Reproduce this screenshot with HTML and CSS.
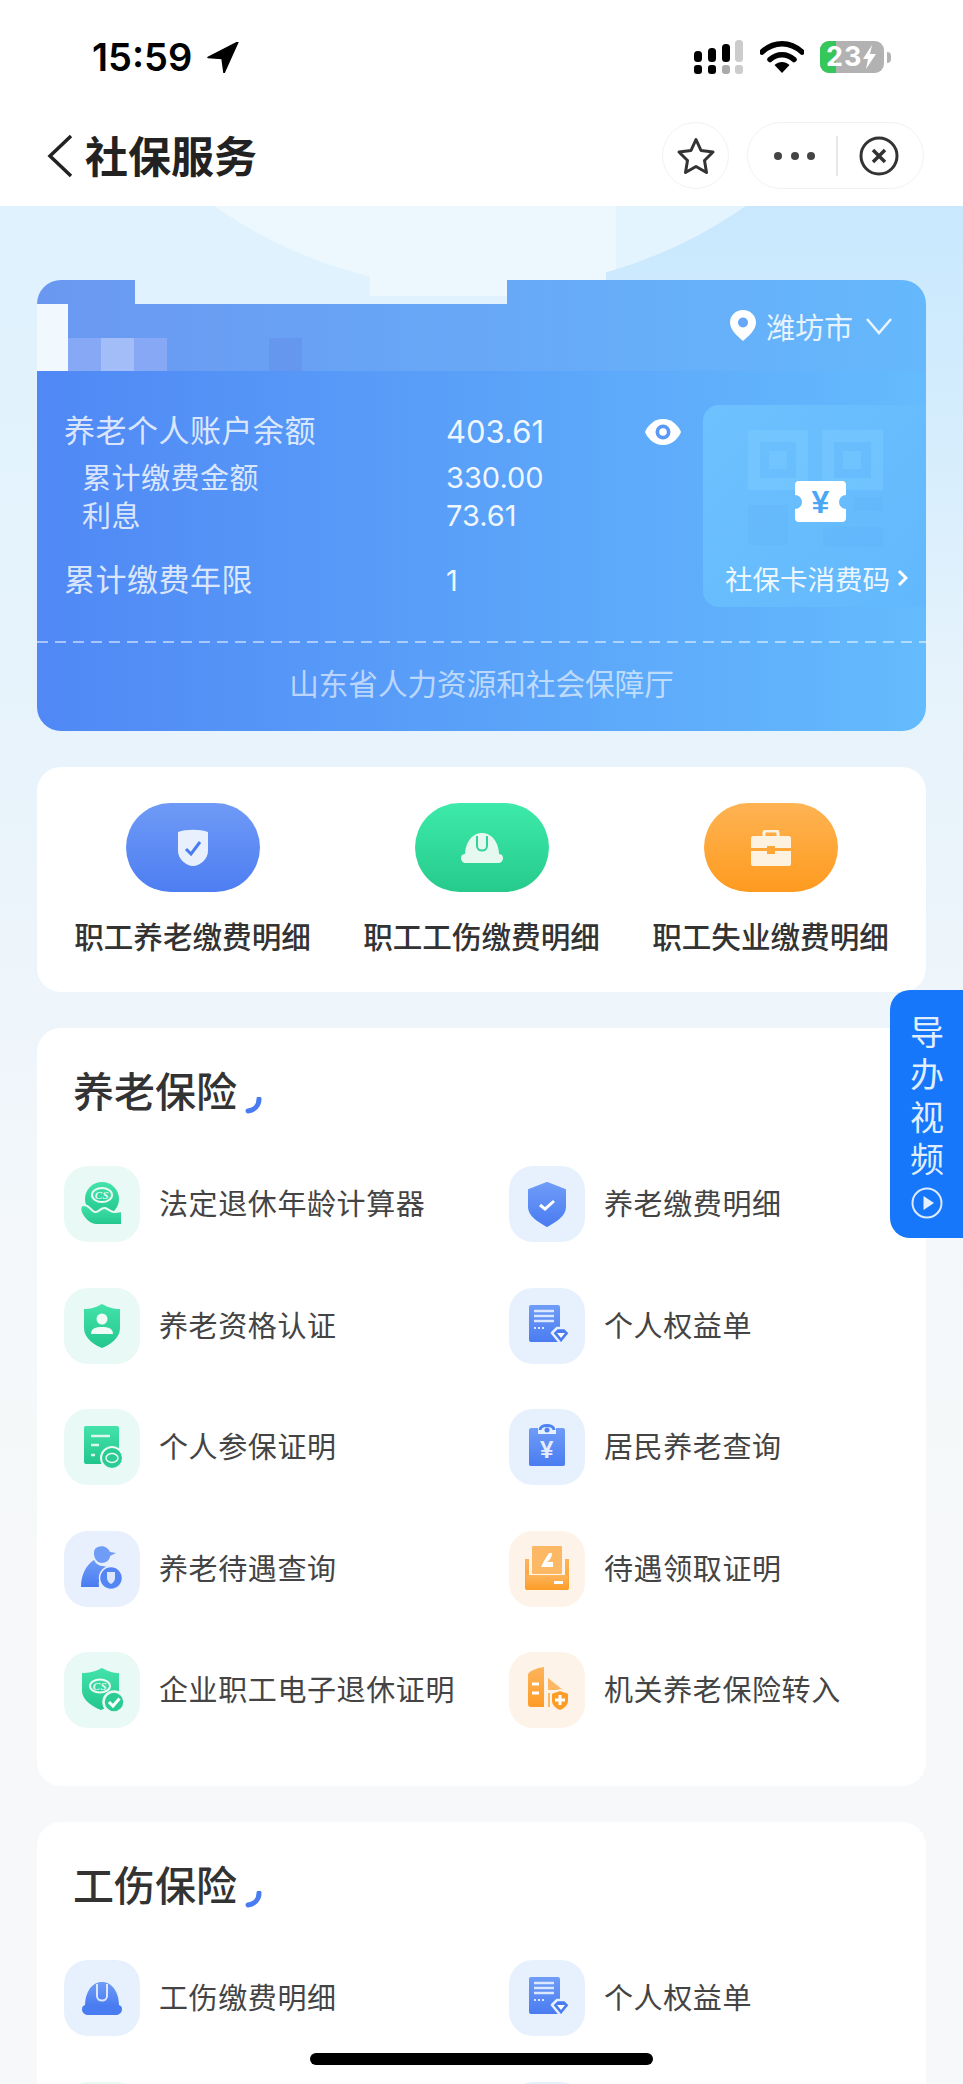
FILE: index.html
```html
<!doctype html>
<html>
    <head>
        <title>社保服务</title>
        <link rel="stylesheet" href="styles.css">
    </head>
    <body>
        <!-- shared icon gradients -->
        <svg class="icon_defs" width="0" height="0">
            <defs>
                <linearGradient id="g_green" x1="0" y1="0" x2="0" y2="1">
                    <stop offset="0" stop-color="#43e3ab"/><stop offset="1" stop-color="#22c68d"/>
                </linearGradient>
                <linearGradient id="g_blue" x1="0" y1="0" x2="0" y2="1">
                    <stop offset="0" stop-color="#6f9cf7"/><stop offset="1" stop-color="#4a7cf1"/>
                </linearGradient>
                <linearGradient id="g_orange" x1="0" y1="0" x2="0" y2="1">
                    <stop offset="0" stop-color="#fdb45c"/><stop offset="1" stop-color="#fd9c26"/>
                </linearGradient>
                <linearGradient id="g_fade" x1="0" y1="0" x2="0" y2="1">
                    <stop offset="0" stop-color="#c9e8fd"/><stop offset="1" stop-color="#c9e8fd" stop-opacity="0"/>
                </linearGradient>
                <linearGradient id="g_lens" gradientUnits="userSpaceOnUse" x1="0" y1="0" x2="963" y2="0">
                    <stop offset="0.64" stop-color="#edf8fe"/><stop offset="0.64" stop-color="#e3f4fe"/>
                </linearGradient>
            </defs>
        </svg>

        <div class="page">
            <header class="top_bar">
                <div class="status_bar">
                    <div class="status_time">
                        <span>15:59</span>
                        <svg width="32" height="31" viewBox="0 0 32 31"><path d="M31 0 1 15.500 15 16.500 17 31z" fill="#000" stroke="#000" stroke-width="1.500" stroke-linejoin="round"/></svg>
                    </div>
                    <div class="status_icons">
                        <svg width="49" height="35" viewBox="0 0 49 35">
                            <rect x="0" y="11" width="8" height="11" rx="3.500" fill="#000"/>
                            <rect x="0" y="25" width="8" height="9" rx="3" fill="#000"/>
                            <rect x="14" y="8" width="8" height="14" rx="3.500" fill="#000"/>
                            <rect x="14" y="25" width="8" height="9" rx="3" fill="#000"/>
                            <rect x="28" y="4" width="8" height="18" rx="3.500" fill="#000"/>
                            <rect x="28" y="25" width="8" height="9" rx="3" fill="#aaa"/>
                            <rect x="41" y="0" width="8" height="22" rx="3.500" fill="#ccc"/>
                            <rect x="41" y="25" width="8" height="9" rx="3" fill="#ccc"/>
                        </svg>
                        <svg class="wifi" width="44" height="32" viewBox="0 0 44 32">
                            <path d="M2 11C14 0 30 0 42 11" fill="none" stroke="#000" stroke-width="5.500" stroke-linecap="round"/>
                            <path d="M10 18.500C17 12 27 12 34 18.500" fill="none" stroke="#000" stroke-width="5.500" stroke-linecap="round"/>
                            <path d="M22 32 14.500 24C19 20 25 20 29.500 24z" fill="#000"/>
                        </svg>
                        <div class="battery">
                            <div class="battery_fill"></div>
                            <span class="battery_num">23</span>
                            <svg class="battery_bolt" width="13" height="24" viewBox="0 0 13 24"><path d="M9 0 0 14h5l-2 10 10-15H7z" fill="#fff"/></svg>
                        </div>
                        <div class="battery_nub"></div>
                    </div>
                </div>
                <nav class="nav_bar">
                    <svg class="nav_back" width="28" height="44" viewBox="0 0 28 44"><path d="M25 2 4 22l21 20" fill="none" stroke="#222" stroke-width="3.500"/></svg>
                    <h1 class="nav_title">社保服务</h1>
                    <div class="nav_star">
                        <svg width="40" height="40" viewBox="0 0 40 40"><path d="M20 3.500 25 14.500 37 16 28.500 24.500 30.500 36.500 20 30.500 9.500 36.500 11.500 24.500 3 16 15 14.500z" fill="none" stroke="#333" stroke-width="3" stroke-linejoin="round"/></svg>
                    </div>
                    <div class="nav_capsule">
                        <div class="nav_dots"><i></i><i></i><i></i></div>
                        <div class="nav_divider"></div>
                        <svg width="40" height="40" viewBox="0 0 40 40"><circle cx="20" cy="20" r="18" fill="none" stroke="#333" stroke-width="3"/><path d="M14 14 26 26M26 14 14 26" stroke="#333" stroke-width="3.500"/></svg>
                    </div>
                </nav>
            </header>

            <!-- pale shapes behind the account card -->
            <svg class="bg_shapes" width="963" height="480" viewBox="0 0 963 480">
                <path d="M600 0H963V480H600z" fill="url(#g_fade)"/>
                <circle cx="480" cy="-378" r="462" fill="url(#g_lens)"/>
                <rect x="370" y="0" width="236" height="90" fill="#edf8fe"/>
            </svg>

            <main class="content">
                <section class="account_card">
                    <div class="account_head">
                        <div class="mosaic">
                            <i class="m_white"></i><i class="m_a"></i><i class="m_b"></i><i class="m_a"></i><i class="m_gap"></i><i class="m_c"></i>
                        </div>
                        <div class="city">
                            <svg width="26" height="31" viewBox="0 0 26 31"><path d="M13 0C5.800 0 0 5.500 0 12.500 0 20 8 26.500 13 31 18 26.500 26 20 26 12.500 26 5.500 20.200 0 13 0z" fill="#fff"/><circle cx="13" cy="12.500" r="5" fill="#67a6f8"/></svg>
                            <span>潍坊市</span>
                            <svg width="28" height="18" viewBox="0 0 28 18"><path d="M2 2 14 16 26 2" fill="none" stroke="#fff" stroke-opacity="0.85" stroke-width="2.500"/></svg>
                        </div>
                    </div>
                    <div class="account_body">
                        <div class="account_info">
                            <div class="info_row info_main">
                                <span>养老个人账户余额</span><b>403.61</b>
                                <svg class="info_eye" width="36" height="26" viewBox="0 0 36 26"><path d="M18 0C28 0 34 8 36 13 34 18 28 26 18 26 8 26 2 18 0 13 2 8 8 0 18 0z" fill="#fff"/><circle cx="18" cy="13" r="7.500" fill="#5a9af6"/><circle cx="18" cy="13" r="3.800" fill="#fff"/></svg>
                            </div>
                            <div class="info_row info_sub"><span>累计缴费金额</span><b>330.00</b></div>
                            <div class="info_row info_sub"><span>利息</span><b>73.61</b></div>
                            <div class="info_row info_last"><span>累计缴费年限</span><b>1</b></div>
                        </div>
                        <div class="qr_panel">
                            <svg class="qr_art" width="223" height="145" viewBox="0 0 223 145">
                                <g fill="none" stroke="#7fd0ff" stroke-opacity="0.4" stroke-width="12">
                                    <rect x="51" y="31" width="48" height="48"/>
                                    <rect x="125" y="31" width="49" height="48"/>
                                </g>
                                <rect x="66" y="46" width="18" height="18" fill="#7fd0ff" fill-opacity="0.35"/>
                                <rect x="140" y="46" width="18" height="18" fill="#7fd0ff" fill-opacity="0.35"/>
                                <g fill="#5aaef8" fill-opacity="0.18">
                                    <rect x="45" y="100" width="40" height="40"/>
                                    <rect x="150" y="92" width="30" height="14"/>
                                    <rect x="120" y="122" width="60" height="20"/>
                                </g>
                                <path d="M96 76H139a4 4 0 0 1 4 4V90a7 7 0 0 0 0 14V113a4 4 0 0 1-4 4H96a4 4 0 0 1-4-4V104a7 7 0 0 0 0-14V80a4 4 0 0 1 4-4z" fill="#fff"/>
                                <text class="qr_yen" x="117.500" y="108" text-anchor="middle">¥</text>
                            </svg>
                            <div class="qr_label">社保卡消费码<svg width="11" height="18" viewBox="0 0 11 18"><path d="M2 2 9 9 2 16" fill="none" stroke="#fff" stroke-width="3"/></svg></div>
                        </div>
                    </div>
                    <div class="account_foot"><span>山东省人力资源和社会保障厅</span></div>
                </section>

                <section class="quick_card">
                    <div class="quick_item">
                        <div class="quick_pill pill_blue">
                            <svg width="34" height="37" viewBox="0 0 34 37"><path d="M2 3C10 0 24 0 32 3V22C32 30 24 37 17 37 10 37 2 30 2 22z" fill="#e8f0fe"/><path d="M10 20 15 25 24 13" fill="none" stroke="#4a7cf1" stroke-width="3"/></svg>
                        </div>
                        <span>职工养老缴费明细</span>
                    </div>
                    <div class="quick_item">
                        <div class="quick_pill pill_green">
                            <svg width="44" height="30" viewBox="0 0 44 30"><path d="M5 22C5 10 12 0 22 0 32 0 39 10 39 22z" fill="#e6f9f1"/><path d="M17 3V13C17 19 27 19 27 13V3" fill="none" stroke="#2fd497" stroke-width="2"/><path d="M1 25C1 22 3 21 5 21H39C41 21 43 22 43 25 43 28 41 30 38 30H6C3 30 1 28 1 25z" fill="#e6f9f1"/></svg>
                        </div>
                        <span>职工工伤缴费明细</span>
                    </div>
                    <div class="quick_item">
                        <div class="quick_pill pill_orange">
                            <svg width="40" height="36" viewBox="0 0 40 36"><path d="M13 7V3C13 1.500 14 1 15 1H25C26 1 27 1.500 27 3V7" fill="none" stroke="#fdf1e0" stroke-width="3"/><path d="M2 6H38C39 6 40 7 40 8V18H24V16H16V18H0V8C0 7 1 6 2 6z" fill="#fdf1e0"/><path d="M0 21H16V24H24V21H40V34C40 35 39 36 38 36H2C1 36 0 35 0 34z" fill="#fdf1e0"/></svg>
                        </div>
                        <span>职工失业缴费明细</span>
                    </div>
                </section>

                <section class="service_card">
                    <h2 class="service_title">养老保险<svg width="18" height="17" viewBox="0 0 18 17"><path d="M14 2C14 8 10 13 3 14" fill="none" stroke="#4a7cf1" stroke-width="5" stroke-linecap="round"/></svg></h2>
                    <div class="service_grid">
                        <div class="service_item">
                            <div class="tile tile_green">
                                <svg width="48" height="48" viewBox="0 0 48 48">
                                    <circle cx="24" cy="19" r="17" fill="url(#g_green)"/>
                                    <ellipse cx="24" cy="15" rx="10" ry="7" fill="none" stroke="#eafaf4" stroke-width="2"/>
                                    <text class="logo_cs" x="24" y="19" text-anchor="middle">CS</text>
                                    <path d="M3 26C7 23 11 27 15 31 20 35 22 27 27 28 31 29 33 33 37 32L44 31V45H18C10 45 0 33 3 26z" fill="url(#g_green)" stroke="#eaf9f5" stroke-width="2"/>
                                </svg>
                            </div>
                            <span>法定退休年龄计算器</span>
                        </div>
                        <div class="service_item">
                            <div class="tile tile_blue">
                                <svg width="48" height="48" viewBox="0 0 48 48"><path d="M24 3 42 10V27C42 36 31 42 24 46 17 42 6 36 6 27V10z" fill="url(#g_blue)" stroke="url(#g_blue)" stroke-width="2" stroke-linejoin="round"/><path d="M17 25 22 29 31 21" fill="none" stroke="#fff" stroke-width="3"/></svg>
                            </div>
                            <span>养老缴费明细</span>
                        </div>
                        <div class="service_item">
                            <div class="tile tile_green">
                                <svg width="48" height="48" viewBox="0 0 48 48"><path d="M24 2C31 6 36 7 42 7V26C42 37 31 43 24 46 17 43 6 37 6 26V7C12 7 17 6 24 2z" fill="url(#g_green)"/><circle cx="24" cy="17" r="5.500" fill="#f0fbf7"/><path d="M13 32C13 26 18 25 24 25 30 25 35 26 35 32z" fill="#f0fbf7"/></svg>
                            </div>
                            <span>养老资格认证</span>
                        </div>
                        <div class="service_item">
                            <div class="tile tile_blue">
                                <svg width="48" height="48" viewBox="0 0 48 48"><rect x="6" y="3" width="31" height="37" rx="2" fill="url(#g_blue)"/><path d="M11 9H31M11 14H31M11 19H31" stroke="#dbe7fd" stroke-width="2.500"/><path d="M11 26H22" stroke="#dbe7fd" stroke-width="2" stroke-dasharray="2 2"/><path d="M29 31 34 26H42L47 31 38 42z" fill="#4a7cf1" stroke="#e7f0fe" stroke-width="2.500" stroke-linejoin="round"/><path d="M34 31H42L38 36z" fill="#fff"/></svg>
                            </div>
                            <span>个人权益单</span>
                        </div>
                        <div class="service_item">
                            <div class="tile tile_green">
                                <svg width="48" height="48" viewBox="0 0 48 48"><rect x="6" y="3" width="35" height="38" rx="2" fill="url(#g_green)"/><path d="M13 13H32M13 22H21M13 32H17" stroke="#dcf7ec" stroke-width="2.500"/><circle cx="34" cy="35" r="11" fill="#2bcc94" stroke="#eaf9f5" stroke-width="2"/><ellipse cx="34" cy="35" rx="6" ry="4.500" fill="none" stroke="#eaf9f5" stroke-width="1.500"/></svg>
                            </div>
                            <span>个人参保证明</span>
                        </div>
                        <div class="service_item">
                            <div class="tile tile_blue">
                                <svg width="48" height="48" viewBox="0 0 48 48"><path d="M17 7C17 1 31 1 31 7" fill="none" stroke="#4f82f2" stroke-width="3"/><path d="M8 5H15V11H33V5H40C41.500 5 42 6 42 7V41C42 42 41.500 43 40 43H8C6.500 43 6 42 6 41V7C6 6 6.500 5 8 5z" fill="url(#g_blue)"/><circle cx="24" cy="7" r="2.500" fill="#4f82f2"/><text class="logo_yen" x="24" y="35" text-anchor="middle">¥</text></svg>
                            </div>
                            <span>居民养老查询</span>
                        </div>
                        <div class="service_item">
                            <div class="tile tile_indigo">
                                <svg width="48" height="48" viewBox="0 0 48 48"><path d="M20 2C26 0 30 3 32 7L38 8 32 11C32 15 28 18 24 18 19 18 16 13 16 9 16 5 17 3 20 2z" fill="#6f9cf7"/><path d="M16 15C18 19 21 21 25 21L29 22C24 25 20 32 21 42H3C3 30 8 20 16 15z" fill="url(#g_blue)"/><circle cx="33" cy="33" r="11.500" fill="#5486f3" stroke="#e8effd" stroke-width="1.500"/><path d="M29 27H37V33C37 36 35 38 33 39 31 38 29 36 29 33z" fill="#dbe7fd"/></svg>
                            </div>
                            <span>养老待遇查询</span>
                        </div>
                        <div class="service_item">
                            <div class="tile tile_orange">
                                <svg width="48" height="48" viewBox="0 0 48 48"><rect x="9" y="1" width="30" height="28" rx="1" fill="#fdb866"/><path d="M21 16 26 8 29 8C29 12 27 15 24 17L30 17V22H18z" fill="#fff"/><path d="M2 14H6V30H42V14H46V43C46 44 45 45 44 45H4C3 45 2 44 2 43z" fill="url(#g_orange)"/><rect x="3" y="30" width="42" height="15" rx="1" fill="url(#g_orange)"/><rect x="31" y="36" width="9" height="3" fill="#fff"/></svg>
                            </div>
                            <span>待遇领取证明</span>
                        </div>
                        <div class="service_item">
                            <div class="tile tile_green">
                                <svg width="48" height="48" viewBox="0 0 48 48"><path d="M24 2C31 6 36 7 41 7V25C41 34 31 41 23 44 15 41 4 34 4 25V7C10 7 17 6 24 2z" fill="url(#g_green)"/><ellipse cx="22" cy="20" rx="10" ry="6.500" fill="none" stroke="#eafaf4" stroke-width="2"/><text class="logo_cs" x="22" y="24" text-anchor="middle">CS</text><circle cx="36" cy="36" r="10.500" fill="#2bcc94" stroke="#eaf9f5" stroke-width="2.500"/><path d="M31 36 35 40 41.500 32.500" fill="none" stroke="#fff" stroke-width="3"/></svg>
                            </div>
                            <span>企业职工电子退休证明</span>
                        </div>
                        <div class="service_item">
                            <div class="tile tile_orange">
                                <svg width="48" height="48" viewBox="0 0 48 48"><path d="M5 9C5 5 14 2 21 1V41H8C6 41 5 40 5 38z" fill="url(#g_orange)"/><path d="M9 18H16M9 27H16" stroke="#fff" stroke-width="3"/><path d="M25 12 40 24 25 24z" fill="#fdb866"/><path d="M25 27H27V41H25z" fill="#fdb866"/><path d="M37 24 46 27V35C46 40 41 44 37 45 33 44 28 40 28 35V27z" fill="#fd9c26" stroke="#fef3e8" stroke-width="2"/><path d="M32 34H42M37 29V39" stroke="#fff" stroke-width="3"/></svg>
                            </div>
                            <span>机关养老保险转入</span>
                        </div>
                    </div>
                </section>

                <section class="service_card">
                    <h2 class="service_title">工伤保险<svg width="18" height="17" viewBox="0 0 18 17"><path d="M14 2C14 8 10 13 3 14" fill="none" stroke="#4a7cf1" stroke-width="5" stroke-linecap="round"/></svg></h2>
                    <div class="service_grid">
                        <div class="service_item">
                            <div class="tile tile_blue">
                                <svg width="48" height="48" viewBox="0 0 48 48"><path d="M7 32C7 18 14 8 24 8 34 8 41 18 41 32z" fill="url(#g_blue)"/><path d="M19 10V22C19 28 29 28 29 22V10" fill="none" stroke="#dbe7fd" stroke-width="2"/><path d="M4 35C4 32 6 31 8 31H40C42 31 44 32 44 35 44 39 41 41 37 41H11C7 41 4 39 4 35z" fill="#4a7cf1"/></svg>
                            </div>
                            <span>工伤缴费明细</span>
                        </div>
                        <div class="service_item">
                            <div class="tile tile_blue">
                                <svg width="48" height="48" viewBox="0 0 48 48"><rect x="6" y="3" width="31" height="37" rx="2" fill="url(#g_blue)"/><path d="M11 9H31M11 14H31M11 19H31" stroke="#dbe7fd" stroke-width="2.500"/><path d="M11 26H22" stroke="#dbe7fd" stroke-width="2" stroke-dasharray="2 2"/><path d="M29 31 34 26H42L47 31 38 42z" fill="#4a7cf1" stroke="#e7f0fe" stroke-width="2.500" stroke-linejoin="round"/><path d="M34 31H42L38 36z" fill="#fff"/></svg>
                            </div>
                            <span>个人权益单</span>
                        </div>
                        <div class="service_item">
                            <div class="tile tile_green"></div>
                        </div>
                        <div class="service_item">
                            <div class="tile tile_blue"></div>
                        </div>
                    </div>
                </section>
            </main>

            <div class="guide_btn">
                <span class="guide_text">导办视频</span>
                <svg width="32" height="32" viewBox="0 0 32 32"><circle cx="16" cy="16" r="14.500" fill="none" stroke="#fff" stroke-opacity="0.85" stroke-width="2"/><path d="M12.500 9 23 16 12.500 23z" fill="#fff" fill-opacity="0.9"/></svg>
            </div>
            <div class="home_bar"></div>
        </div>
    </body>
</html>
```

FILE: styles.css
```css
* {
    box-sizing: border-box;
}
html, body {
    padding: 0;
    margin: 0;
}
body {
    font-family: "Noto Sans CJK SC", "Noto Sans", sans-serif;
    color: #333;
}
.icon_defs {
    position: absolute;
}
.page {
    position: relative;
    width: 963px;
    height: 2084px;
    overflow: hidden;
    background: linear-gradient(180deg, #dff2fe 206px, #e8f3fb 760px, #f5f8fa 1300px, #f7f8f9 1800px);
}

/* status bar + nav */
.top_bar {
    position: relative;
    height: 206px;
    background-color: #fff;
}
.status_bar {
    height: 100px;
    display: flex;
    justify-content: space-between;
    align-items: flex-start;
    padding: 40px 72px 0 92px;
}
.status_time {
    display: flex;
    align-items: center;
    gap: 15px;
    font-family: Inter, sans-serif;
    font-weight: 600;
    font-size: 38px;
    line-height: 34px;
    color: #000;
}
.status_icons {
    display: flex;
    align-items: flex-start;
}
.wifi {
    margin: 1px 16px 0 17px;
}
.battery {
    position: relative;
    width: 64px;
    height: 32px;
    margin-top: 1px;
    border-radius: 9px;
    overflow: hidden;
    background-color: #b2b2b2;
    display: flex;
    align-items: center;
}
.battery_fill {
    position: absolute;
    left: 0;
    top: 0;
    bottom: 0;
    width: 16px;
    background-color: #35c759;
}
.battery_num {
    position: relative;
    margin-left: 6px;
    font-family: Inter, sans-serif;
    font-weight: 700;
    font-size: 27px;
    line-height: 32px;
    letter-spacing: 1px;
    color: #fff;
}
.battery_bolt {
    position: relative;
    margin-left: 1px;
}
.battery_nub {
    width: 4px;
    height: 11px;
    margin: 12px 0 0 3px;
    border-radius: 0 4px 4px 0;
    background-color: #b2b2b2;
}
.nav_bar {
    height: 106px;
    padding: 0 39px 0 46px;
    display: flex;
    align-items: flex-start;
}
.nav_back {
    margin: 34px 11px 0 0;
}
.nav_title {
    flex: 1;
    margin: 26px 0 0;
    font-size: 43px;
    line-height: 56px;
    font-weight: 700;
    color: #222;
}
.nav_star {
    width: 67px;
    height: 67px;
    margin: 22px 18px 0 0;
    border: 1px solid #f2f2f2;
    border-radius: 50%;
    display: flex;
    align-items: center;
    justify-content: center;
}
.nav_capsule {
    width: 177px;
    height: 67px;
    margin-top: 22px;
    padding-left: 26px;
    border: 1px solid #f2f2f2;
    border-radius: 34px;
    display: flex;
    align-items: center;
}
.nav_dots {
    display: flex;
    gap: 8.500px;
}
.nav_dots i {
    width: 8px;
    height: 8px;
    border-radius: 50%;
    background-color: #444;
}
.nav_divider {
    width: 2px;
    height: 40px;
    margin: 0 21px;
    background-color: #e8e8e8;
}

.bg_shapes {
    position: absolute;
    left: 0;
    top: 206px;
}
.content {
    position: relative;
    padding: 74px 37px 0;
}

/* account card */
.account_card {
    height: 451px;
    color: #fff;
    clip-path: inset(0 round 24px);
}
.account_head {
    position: relative;
    height: 91px;
    background: linear-gradient(90deg, #6a98f1, #65b8fc);
    clip-path: polygon(0 0, 98px 0, 98px 24px, 470px 24px, 470px 0, 100% 0, 100% 100%, 0 100%);
}
.mosaic {
    position: absolute;
    left: 0;
    bottom: 0;
    display: flex;
    align-items: flex-end;
}
.mosaic i {
    display: block;
    width: 33px;
    height: 33px;
}
.mosaic .m_white {
    width: 31px;
    height: 67px;
    background-color: #f1f9fe;
}
.mosaic .m_a {
    background-color: #87a8f4;
}
.mosaic .m_b {
    background-color: #a2bdf7;
}
.mosaic .m_gap {
    width: 102px;
    height: 0;
}
.mosaic .m_c {
    background-color: #6597ef;
}
.city {
    position: absolute;
    right: 33px;
    top: 30px;
    display: flex;
    align-items: center;
    font-size: 29px;
    line-height: 30px;
    color: rgba(255, 255, 255, 0.85);
}
.city span {
    margin: 0 12px 0 10px;
}
.account_body {
    height: 270px;
    display: flex;
    justify-content: space-between;
    background: linear-gradient(90deg, #5088f5, #64bbfd);
}
.account_info {
    width: 666px;
    padding: 39px 0 0 27px;
}
.info_row {
    position: relative;
    height: 44px;
    display: flex;
    align-items: center;
    font-size: 31px;
    letter-spacing: 0.500px;
    color: rgba(255, 255, 255, 0.8);
}
.info_row span {
    width: 382px;
    flex-shrink: 0;
}
.info_row b {
    font-family: Inter, sans-serif;
    font-weight: 400;
    font-size: 29px;
    letter-spacing: 0;
    color: rgba(255, 255, 255, 0.92);
}
.info_main span {
    padding-bottom: 7px;
}
.info_main b {
    padding-bottom: 2px;
    font-size: 31px;
}
.info_eye {
    position: absolute;
    right: 22px;
    top: 9px;
}
.info_sub {
    height: 38px;
    font-size: 29px;
}
.info_main + .info_sub {
    margin-top: 4px;
}
.info_sub span {
    padding: 0 0 2px 18px;
}
.info_last {
    margin-top: 24px;
}
.info_last span {
    padding-bottom: 5px;
}
.qr_panel {
    width: 223px;
    height: 202px;
    margin-top: 34px;
    border-radius: 16px 0 0 16px;
    background: linear-gradient(135deg, #6dc1fd, #62b8fd);
}
.qr_art {
    display: block;
}
.qr_yen {
    font-family: "Liberation Sans", sans-serif;
    font-size: 32px;
    font-weight: 700;
    fill: #4ba6f6;
}
.qr_label {
    margin-top: 10px;
    padding-left: 22px;
    display: flex;
    align-items: center;
    font-size: 27.500px;
    line-height: 36px;
    color: rgba(255, 255, 255, 0.9);
    white-space: nowrap;
}
.qr_label svg {
    margin-left: 7px;
}
.account_foot {
    height: 90px;
    padding-top: 21px;
    text-align: center;
    font-size: 29.600px;
    line-height: 42px;
    color: rgba(255, 255, 255, 0.62);
    background: repeating-linear-gradient(90deg, rgba(255, 255, 255, 0.5) 0 11px, transparent 11px 18px) 0 0 / 100% 2px no-repeat,
        linear-gradient(90deg, #5088f5, #64bbfd);
}

/* three big shortcuts */
.quick_card {
    height: 225px;
    margin-top: 36px;
    padding: 36px 0 0 0;
    display: flex;
    justify-content: center;
    gap: 13px;
    border-radius: 24px;
    background-color: #fff;
}
.quick_item {
    width: 276px;
    display: flex;
    flex-direction: column;
    align-items: center;
}
.quick_pill {
    width: 134px;
    height: 89px;
    border-radius: 45px;
    display: flex;
    align-items: center;
    justify-content: center;
}
.pill_blue {
    background: linear-gradient(180deg, #6f9af6, #4d7ef2);
}
.pill_green {
    background: linear-gradient(180deg, #3deaa9, #26cb8c);
}
.pill_orange {
    background: linear-gradient(180deg, #feb353, #fe9b1f);
}
.quick_item span {
    margin-top: 23px;
    font-size: 29.600px;
    line-height: 42px;
    font-weight: 500;
    color: #333;
    white-space: nowrap;
}

/* service lists */
.service_card {
    margin-top: 36px;
    padding: 30px 27px 58px;
    border-radius: 24px;
    background-color: #fff;
}
.service_title {
    margin: 0 0 46px 9px;
    display: flex;
    align-items: flex-end;
    font-size: 41px;
    line-height: 62px;
    font-weight: 500;
    color: #333;
}
.service_title svg {
    margin: 0 0 6px 8px;
}
.service_grid {
    display: grid;
    grid-template-columns: 445px 1fr;
    row-gap: 45.500px;
}
.service_item {
    display: flex;
    align-items: center;
    gap: 19px;
    font-size: 29px;
    letter-spacing: 0.600px;
    line-height: 72px;
    color: #444;
    white-space: nowrap;
}
.tile {
    flex-shrink: 0;
    width: 76px;
    height: 76px;
    border-radius: 24px;
    display: flex;
    align-items: center;
    justify-content: center;
}
.service_item span {
    padding-bottom: 4px;
}
.tile_green {
    background-color: #e9f9f5;
}
.tile_blue {
    background-color: #e7f1fe;
}
.tile_indigo {
    background-color: #e8effd;
}
.tile_orange {
    background-color: #fef3e8;
}
.logo_cs {
    font-family: "Liberation Serif", serif;
    font-style: italic;
    font-weight: 700;
    font-size: 11px;
    fill: #eafaf4;
}
.logo_yen {
    font-family: "Liberation Sans", sans-serif;
    font-weight: 700;
    font-size: 24px;
    fill: #e4edfe;
}

/* floating bits */
.guide_btn {
    position: absolute;
    right: 0;
    top: 990px;
    width: 73px;
    height: 248px;
    padding-top: 25px;
    border-radius: 20px 0 0 20px;
    background-color: #1677fb;
    display: flex;
    flex-direction: column;
    align-items: center;
}
.guide_text {
    writing-mode: vertical-rl;
    font-size: 34px;
    line-height: 34px;
    letter-spacing: 8.500px;
    color: rgba(255, 255, 255, 0.88);
}
.guide_btn svg {
    margin-top: 2px;
}
.home_bar {
    position: absolute;
    left: 310px;
    top: 2053px;
    width: 343px;
    height: 12px;
    border-radius: 6px;
    background-color: #000;
}
```
